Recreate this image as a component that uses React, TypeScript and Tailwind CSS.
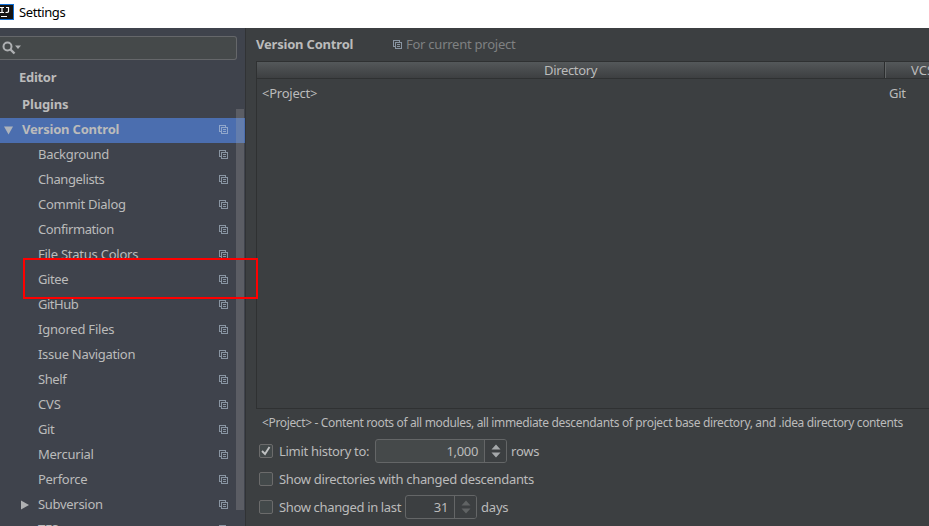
import React from "react";

type TextProps = { children: string; className?: string };

function Text({ children, className = "" }: TextProps) {
  return <span className={`block shrink-0 whitespace-pre ${className}`}>{children}</span>;
}

function ScopeIcon({ className }: { className: string }) {
  return (
    <svg className={`block shrink-0 ${className}`} width="10" height="10" viewBox="0 0 10 10" fill="none" stroke="currentColor" shapeRendering="crispEdges">
      <path d="M2 6.5H0.5V0.5H6.5V2" />
      <path d="M2.5 2.5H8.5V8.5H2.5Z" />
      <path d="M4 4.5H7M4 6.5H7" />
    </svg>
  );
}

const pages: { name: string; tracking: string; expandable?: boolean }[] = [
  { name: "Background", tracking: "tracking-[-0.3px]" },
  { name: "Changelists", tracking: "tracking-[-0.4px]" },
  { name: "Commit Dialog", tracking: "tracking-[-0.26px]" },
  { name: "Confirmation", tracking: "tracking-[-0.4px]" },
  { name: "File Status Colors", tracking: "tracking-[-0.24px]" },
  { name: "Gitee", tracking: "tracking-[-0.4px]" },
  { name: "GitHub", tracking: "tracking-[-0.5px]" },
  { name: "Ignored Files", tracking: "tracking-[-0.22px]" },
  { name: "Issue Navigation", tracking: "tracking-[-0.3px]" },
  { name: "Shelf", tracking: "tracking-[-0.4px]" },
  { name: "CVS", tracking: "tracking-[-0.1px]" },
  { name: "Git", tracking: "tracking-[-0.4px]" },
  { name: "Mercurial", tracking: "tracking-[-0.25px]" },
  { name: "Perforce", tracking: "tracking-[-0.3px]" },
  { name: "Subversion", tracking: "tracking-[-0.3px]", expandable: true },
  { name: "TFS", tracking: "tracking-[-0.3px]" },
];

function TitleBar() {
  return (
    <header className="flex h-7 shrink-0 items-start bg-white text-black">
      <svg className="mt-1 block" width="14" height="16" viewBox="0 0 14 16">
        <path d="M0 0H14V16H0Z" fill="#0f6fd8" />
        <path d="M0 1H13V15H0Z" fill="#151515" />
        <path d="M0 3.500H4M2 3.500V8.500M0 8.500H4M6 3.500H9M8.500 3V7.500Q8.500 8.500 5.500 8.500" fill="none" stroke="#fff" strokeWidth="1.2" />
        <path d="M1 12.5H7" stroke="#fff" />
      </svg>
      <Text className="ml-[5px] mt-0.5 text-[13px] leading-5 tracking-[-0.4px]">Settings</Text>
    </header>
  );
}

function Sidebar() {
  return (
    <aside className="relative flex w-[245px] shrink-0 flex-col overflow-hidden bg-[#3f434c]">
      <div className="mt-2 flex h-6 w-[237px] shrink-0 items-center rounded-r-[3px] border border-l-0 border-[#65676a] bg-[#45494a]">
        <svg className="ml-0.5 block" width="20" height="16" viewBox="0 0 20 16" fill="none">
          <circle cx="5.500" cy="6.500" r="4" stroke="#aeb0b2" strokeWidth="2" />
          <path d="M8.500 9.500L12.500 13.500" stroke="#aeb0b2" strokeWidth="2.400" />
          <path d="M13 5.500H19L16 9Z" fill="#aeb0b2" />
        </svg>
      </div>
      <div className="mt-1 flex h-[27px] shrink-0 items-center pb-0.5 pl-[19px] font-bold tracking-[-0.3px]">
        <Text>Editor</Text>
      </div>
      <div className="flex h-[27px] shrink-0 items-center pb-0.5 pl-[22px] font-bold tracking-[-0.15px]">
        <Text>Plugins</Text>
      </div>
      <div className="flex h-[25px] shrink-0 items-center bg-[#4b6eaf] pb-px pr-4 font-bold tracking-[-0.2px]">
        <svg className="ml-1 block" width="9" height="9" viewBox="0 0 9 9"><path d="M0 0.500H9L4.500 8.500Z" fill="#aeb3bb" /></svg>
        <Text className="-mt-0.5 ml-[9px]">Version Control</Text>
        <ScopeIcon className="ml-auto text-[#91a7cb]" />
      </div>
      {pages.map((page) => (
        <div key={page.name} className="flex h-[25px] shrink-0 items-center pb-px pr-4">
          <div className="w-[38px] shrink-0 pl-[21px]">
            {page.expandable && (
              <svg className="block" width="8" height="10" viewBox="0 0 8 10"><path d="M0 0.500L8 5L0 9.500Z" fill="#afb1b3" /></svg>
            )}
          </div>
          <Text className={`-mt-0.5 ${page.tracking}`}>{page.name}</Text>
          <ScopeIcon className="ml-auto text-[#8995a2]" />
        </div>
      ))}
      <div className="absolute left-[236px] top-[81px] h-[401px] w-2 bg-[#a6a6a6]/27" />
    </aside>
  );
}

function CheckBox({ checked = false }: { checked?: boolean }) {
  return (
    <span className="flex size-3.5 shrink-0 items-center justify-center rounded-[2px] border border-[#6b6b6b] bg-[#43494a]">
      {checked && (
        <svg width="10" height="10" viewBox="0 0 10 10" fill="none" stroke="#c0c2c3" strokeWidth="1.900"><path d="M1 5L4 8L8.500 1" /></svg>
      )}
    </span>
  );
}

function Spinner({ value, className, arrows }: { value: string; className: string; arrows: string }) {
  return (
    <div className={`flex h-6 shrink-0 rounded-[3px] border border-[#646667] ${className}`}>
      <div className="flex flex-1 items-center justify-end pr-1.5"><Text className="tracking-[-0.35px]">{value}</Text></div>
      <div className={`flex w-[22px] items-center justify-center rounded-r-[2px] border-l border-[#646667] bg-[#3c3f41] ${arrows}`}>
        <svg width="10" height="14" viewBox="0 0 10 14"><path d="M0.500 5.500L5 0.500L9.500 5.500ZM0.500 8.500L5 13.500L9.500 8.500Z" fill="currentColor" /></svg>
      </div>
    </div>
  );
}

function MainPanel() {
  return (
    <main className="flex min-w-0 flex-1 flex-col overflow-hidden border-l border-[#313335] bg-[#3c3f41] pl-2.5">
      <div className="flex h-[33px] shrink-0 items-center">
        <Text className="-mt-0.5 w-[137px] font-bold tracking-[-0.2px]">Version Control</Text>
        <ScopeIcon className="text-[#8995a2]" />
        <Text className="-mt-0.5 ml-[3px] tracking-[-0.25px] text-[#7f8182]">For current project</Text>
      </div>
      <div className="flex h-[348px] shrink-0 flex-col border border-r-0 border-[#2f3132]">
        <div className="flex h-[17px] shrink-0 border-b border-[#2f3132] bg-linear-to-b from-[#54585a] to-[#3d3f41]">
          <div className="flex w-[628px] shrink-0 items-center justify-center border-r border-[#2b2d2e]"><Text className="tracking-[-0.35px]">Directory</Text></div>
          <div className="flex shrink-0 items-center border-l border-[#626566] pl-[25px]"><Text>VCS</Text></div>
        </div>
        <div className="flex h-[30px] shrink-0 items-center pb-0.5 pl-[5px] tracking-[-0.25px]">
          <Text className="w-[627px]">{"<Project>"}</Text>
          <Text>Git</Text>
        </div>
      </div>
      <div className="flex h-7 shrink-0 items-center pl-1.5 text-[12px] tracking-[-0.352px]">
        <Text>{"<Project> - Content roots of all modules, all immediate descendants of project base directory, and .idea directory contents"}</Text>
      </div>
      <div className="flex h-7 shrink-0 items-center pl-[3px]">
        <CheckBox checked />
        <Text className="ml-1.5 w-24 tracking-[-0.3px]">Limit history to:</Text>
        <Spinner value="1,000" className="w-[132px] bg-[#45494a]" arrows="text-[#a5a8aa]" />
        <Text className="ml-1 tracking-[-0.2px]">rows</Text>
      </div>
      <div className="flex h-7 shrink-0 items-center pl-[3px]">
        <CheckBox />
        <Text className="ml-1.5 tracking-[-0.32px]">Show directories with changed descendants</Text>
      </div>
      <div className="flex h-7 shrink-0 items-center pl-[3px]">
        <CheckBox />
        <Text className="ml-1.5 w-[126px] tracking-[-0.35px]">Show changed in last</Text>
        <Spinner value="31" className="w-[72px] bg-[#3c3f41]" arrows="text-[#606364]" />
        <Text className="ml-1 tracking-[-0.2px]">days</Text>
      </div>
    </main>
  );
}

export default function App() {
  return (
    <div className="relative flex h-[526px] w-[929px] flex-col overflow-hidden font-['Noto_Sans','Open_Sans',sans-serif] text-[13px] leading-5 text-[#bbbbbb]">
      <TitleBar />
      <div className="flex min-h-0 flex-1">
        <Sidebar />
        <MainPanel />
      </div>
      <div className="pointer-events-none absolute left-[23px] top-[258px] h-[41px] w-[235px] border-2 border-[#ff0000]" />
    </div>
  );
}
